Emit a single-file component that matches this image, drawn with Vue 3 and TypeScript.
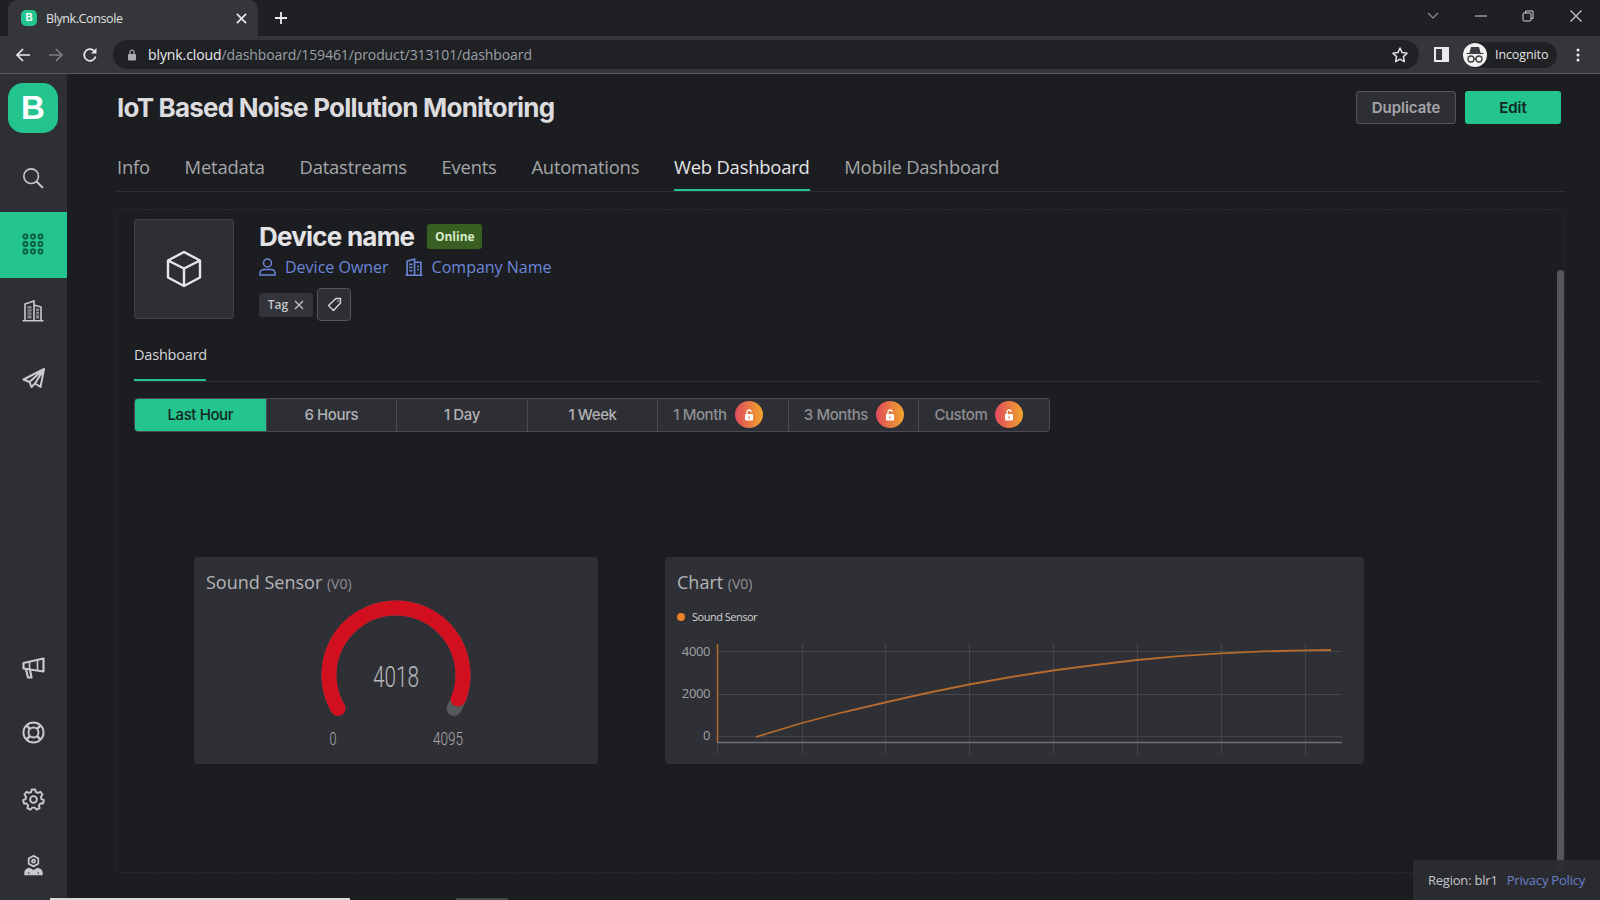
<script setup lang="ts">
import { computed } from 'vue'

interface Tab { label: string; active?: boolean }
interface Range { label: string; active?: boolean; locked?: boolean }

const tabs: Tab[] = [
  { label: 'Info' },
  { label: 'Metadata' },
  { label: 'Datastreams' },
  { label: 'Events' },
  { label: 'Automations' },
  { label: 'Web Dashboard', active: true },
  { label: 'Mobile Dashboard' }
]

const ranges: Range[] = [
  { label: 'Last Hour', active: true },
  { label: '6 Hours' },
  { label: '1 Day' },
  { label: '1 Week' },
  { label: '1 Month', locked: true },
  { label: '3 Months', locked: true },
  { label: 'Custom', locked: true }
]

const gridX = [124.5, 207.5, 291.5, 375.5, 459.5, 543.5, 627.5]
const gridY = [7.5, 50.5, 92.5]

// точки кривой графика
const curve = [
  [78, 93], [124, 79], [166, 68], [207, 58.5], [249, 49], [291, 40.5], [333, 33], [375, 26.5],
  [417, 21], [459, 16], [501, 12.2], [543, 9.3], [585, 7.4], [627, 6.4], [653, 6]
]
const curvePoints = computed(() => curve.map((p) => p.join(',')).join(' '))
</script>

<template>
  <div class="page">
    <div class="tabstrip">
      <div class="browser-tab">
        <span class="favicon">B</span>
        <span class="browser-tab-title">Blynk.Console</span>
        <svg class="tab-x" width="11" height="11" viewBox="0 0 12 12"><path d="M1 1l10 10M11 1L1 11" stroke="#e8eaed" stroke-width="1.8" /></svg>
      </div>
      <svg class="tab-plus" width="14" height="14" viewBox="0 0 14 14"><path d="M7 1v12M1 7h12" stroke="#e8eaed" stroke-width="1.8" /></svg>
      <div class="win-controls">
        <svg width="12" height="8" viewBox="0 0 12 8"><path d="M1 1l5 5 5-5" fill="none" stroke="#8e9094" stroke-width="1.1" /></svg>
        <svg class="win-min" width="12" height="2" viewBox="0 0 12 2"><path d="M0 1h12" stroke="#d0d1d3" stroke-width="1" /></svg>
        <svg class="win-max" width="12" height="12" viewBox="0 0 12 12"><rect x="1" y="3" width="8" height="8" rx="1" fill="none" stroke="#d0d1d3" /><path d="M3.5 3V1H11v7.5H9" fill="none" stroke="#d0d1d3" /></svg>
        <svg class="win-close" width="12" height="12" viewBox="0 0 12 12"><path d="M.5.5l11 11M11.5.5l-11 11" stroke="#d0d1d3" stroke-width="1.1" /></svg>
      </div>
    </div>

    <div class="toolbar">
      <svg width="16" height="16" viewBox="0 0 16 16"><path d="M15 8H2M8 2L2 8l6 6" fill="none" stroke="#e8eaed" stroke-width="1.7" /></svg>
      <svg class="fwd" width="16" height="16" viewBox="0 0 16 16"><path d="M1 8h13M8 2l6 6-6 6" fill="none" stroke="#7c7e82" stroke-width="1.7" /></svg>
      <svg class="reload" width="16" height="16" viewBox="0 0 16 16"><path d="M13.6 9.5A5.8 5.8 0 1 1 12.2 4" fill="none" stroke="#e8eaed" stroke-width="1.7" /><path d="M14.5 1v5.4H9z" fill="#e8eaed" /></svg>
      <div class="omnibox">
        <svg width="10" height="12" viewBox="0 0 10 12"><rect x="1" y="5" width="8" height="6.5" rx="1" fill="#a9abae" /><path d="M3 5V3.2a2 2 0 0 1 4 0V5" fill="none" stroke="#a9abae" stroke-width="1.2" /></svg>
        <span class="url"><span class="host">blynk.cloud</span>/dashboard/159461/product/313101/dashboard</span>
        <svg class="star" width="18" height="18" viewBox="0 0 18 18"><path d="M9 2l2.1 4.6 5 .6-3.7 3.4 1 5L9 13.100l-4.400 2.500 1-5L1.900 7.200l5-.6z" fill="none" stroke="#e0e1e3" stroke-width="1.5" stroke-linejoin="round" /></svg>
      </div>
      <svg class="side-panel" width="15" height="15" viewBox="0 0 15 15"><rect x="1" y="1" width="13" height="13" fill="none" stroke="#e8eaed" stroke-width="2" /><rect x="8" y="1" width="6" height="13" fill="#e8eaed" /></svg>
      <div class="incognito">
        <span class="incognito-badge">
          <svg width="20" height="18" viewBox="0 0 20 18"><path d="M5 7l1.500-5.500h7L15 7zM1.500 7.500h17" fill="#3b3c3f" stroke="#3b3c3f" stroke-width="1.2" /><circle cx="6" cy="13" r="3" fill="none" stroke="#3b3c3f" stroke-width="1.3" /><circle cx="14" cy="13" r="3" fill="none" stroke="#3b3c3f" stroke-width="1.3" /><path d="M9 13h2" stroke="#3b3c3f" stroke-width="1.3" /></svg>
        </span>
        <span>Incognito</span>
      </div>
      <svg class="kebab" width="4" height="14" viewBox="0 0 4 14"><circle cx="2" cy="2" r="1.5" fill="#e8eaed" /><circle cx="2" cy="7" r="1.5" fill="#e8eaed" /><circle cx="2" cy="12" r="1.5" fill="#e8eaed" /></svg>
    </div>

    <div class="app">
      <aside class="sidebar">
        <div class="logo">B</div>
        <div class="nav-item nav-search">
          <svg width="22" height="22" viewBox="0 0 24 24"><circle cx="10" cy="10" r="8" fill="none" stroke="#c8c9cb" stroke-width="1.8" /><path d="M15.800 15.800l7 7" stroke="#c8c9cb" stroke-width="2.2" /></svg>
        </div>
        <div class="nav-item nav-active">
          <svg width="22" height="22" viewBox="0 0 22 22">
            <g fill="none" stroke="#0b5c40" stroke-width="1.8">
              <rect x="1.500" y="1.500" width="4" height="4" rx="1.500" /><rect x="9" y="1.500" width="4" height="4" rx="1.500" /><rect x="16.500" y="1.500" width="4" height="4" rx="1.500" />
              <rect x="1.500" y="9" width="4" height="4" rx="1.500" /><rect x="9" y="9" width="4" height="4" rx="1.500" /><rect x="16.500" y="9" width="4" height="4" rx="1.500" />
              <rect x="1.500" y="16.500" width="4" height="4" rx="1.500" /><rect x="9" y="16.500" width="4" height="4" rx="1.500" /><rect x="16.500" y="16.500" width="4" height="4" rx="1.500" />
            </g>
          </svg>
        </div>
        <div class="nav-item">
          <svg width="22" height="22" viewBox="0 0 22 22"><g fill="none" stroke="#c8c9cb" stroke-width="1.6"><path d="M3 20V4l9-3v19M12 5l7 2v13M.5 20.800h21" /></g><path d="M5.500 6h4v12.500h-4zM14.200 8.500h2.800v10h-2.800z" fill="#8a8b8f" /><path d="M5.500 9h4M5.500 12h4M5.500 15h4M14.200 11.500H17M14.200 14.500H17" stroke="#2e2f34" stroke-width=".8" /></svg>
        </div>
        <div class="nav-item nav-plane">
          <svg width="23" height="20" viewBox="0 0 23 20"><g fill="none" stroke="#c8c9cb" stroke-width="2" stroke-linejoin="round"><path d="M22 1L1.500 11.500l6 2.500zM22 1l-9 14.500 5.500 3.500zM7.500 14l2 5 3.500-3.500" /></g></svg>
        </div>
        <div class="nav-spacer"></div>
        <div class="nav-item nav-horn">
          <svg width="23" height="22" viewBox="0 0 23 22"><g fill="none" stroke="#c8c9cb" stroke-width="2.2" stroke-linejoin="round"><path d="M1.500 6L21.500 1.500v13L1.500 11.500z" /><path d="M7.500 5v8M15.500 3v10" stroke-width="1.6" /><path d="M4 12.500l2 8h3.500L8 13" /></g></svg>
        </div>
        <div class="nav-item nav-ring">
          <svg width="23" height="23" viewBox="0 0 24 24"><g fill="none" stroke="#c8c9cb" stroke-width="2"><circle cx="12" cy="12" r="10.500" /><circle cx="12" cy="12" r="5.200" /><path d="M4.800 4.800l3.400 3.400M19.200 4.800l-3.400 3.400M4.800 19.200l3.400-3.400M19.200 19.200l-3.400-3.400" stroke-width="2.6" /></g></svg>
        </div>
        <div class="nav-item">
          <svg width="23" height="23" viewBox="0 0 24 24"><g fill="none" stroke="#c8c9cb" stroke-width="2" stroke-linejoin="round"><path d="M10.200 1.500h3.600l.7 2.700 2.200 1 2.500-1.200 2.200 2.800-1.600 2.300.5 2.400 2.500 1.100-.8 3.500-2.800.1-1.500 2-.1.100.8 2.700-3.200 1.600-1.900-2.100h-2.600l-1.900 2.100-3.200-1.600.8-2.700-1.600-2.100-2.800-.1-.8-3.500 2.500-1.100.5-2.400L2.600 6.800l2.200-2.800 2.500 1.200 2.200-1z" /><circle cx="12" cy="12" r="3.500" /></g></svg>
        </div>
        <div class="nav-item nav-last">
          <svg width="21" height="23" viewBox="0 0 24 24"><g fill="none" stroke="#c8c9cb" stroke-width="2" stroke-linejoin="round"><path d="M12 1l5.500 3v6L12 13 6.500 10V4z" /><circle cx="12" cy="7" r="1.800" /></g><path d="M1.500 23v-3c0-3 3-5 6-5.500l4.500 2.500 4.500-2.500c3 .5 6 2.500 6 5.500v3z" fill="#c8c9cb" /><path d="M6.500 21.500V20M17.500 21.500V20" stroke="#2e2f34" stroke-width="1.6" /></svg>
        </div>
      </aside>

      <main class="main">
        <header class="head">
          <h1>IoT Based Noise Pollution Monitoring</h1>
          <button class="btn btn-dup">Duplicate</button>
          <button class="btn btn-edit">Edit</button>
        </header>

        <nav class="tabs">
          <span v-for="t in tabs" :key="t.label" class="tab" :class="{ on: t.active }">{{ t.label }}</span>
        </nav>

        <section class="panel">
          <div class="device">
            <div class="device-img">
              <svg width="38" height="38" viewBox="0 0 38 38"><g fill="none" stroke="#e6e6e8" stroke-width="2.4" stroke-linejoin="round"><path d="M19 2l16 8.500v17L19 36 3 27.500v-17zM3 10.500l16 8 16-8M19 18.500V36" /></g></svg>
            </div>
            <div class="device-info">
              <div class="device-title">
                <span class="device-name">Device name</span>
                <span class="online">Online</span>
              </div>
              <div class="device-links">
                <svg width="17" height="18" viewBox="0 0 17 18"><g fill="none" stroke="#6b86d9" stroke-width="1.5"><circle cx="8.500" cy="5" r="4" /><path d="M1 17v-2c0-2.200 2-3.500 4-3.500h7c2 0 4 1.300 4 3.500v2z" /></g></svg>
                <span class="link">Device Owner</span>
                <svg class="link-icon" width="18" height="18" viewBox="0 0 17 17"><g fill="none" stroke="#6b86d9" stroke-width="1.5"><path d="M2 16V3l7-2v15M9 4h6v12M.5 16.300h16" /><path d="M4 6h3M4 9h3M4 12h3M11.500 8h1.500M11.500 11h1.500" /></g></svg>
                <span class="link">Company Name</span>
              </div>
              <div class="device-tags">
                <span class="tag">Tag
                  <svg width="10" height="10" viewBox="0 0 10 10"><path d="M1 1l8 8M9 1L1 9" stroke="#c4c5c7" stroke-width="1.3" /></svg>
                </span>
                <span class="tag-btn">
                  <svg width="15" height="15" viewBox="0 0 15 15"><path d="M9 1.500h4.500V6L6.500 13.500 1.500 8.500z" fill="none" stroke="#d8d9db" stroke-width="1.4" stroke-linejoin="round" /><circle cx="11" cy="4" r=".8" fill="#d8d9db" /></svg>
                </span>
              </div>
            </div>
          </div>

          <div class="subtabs"><span class="subtab">Dashboard</span></div>

          <div class="ranges">
            <div v-for="r in ranges" :key="r.label" class="range" :class="{ on: r.active, locked: r.locked }">
              <span>{{ r.label }}</span>
              <span v-if="r.locked" class="lock">
                <svg width="10" height="12" viewBox="0 0 10 12"><rect x="1" y="5" width="8" height="6.500" rx="1" fill="#fff" /><path d="M3 5V3a2 2 0 0 1 4 0" fill="none" stroke="#fff" stroke-width="1.3" /><path d="M5 7.500v2" stroke="#e8703f" stroke-width="1.2" /></svg>
              </span>
            </div>
          </div>

          <div class="widgets">
            <div class="widget gauge-card">
              <div class="widget-title">Sound Sensor <small>(V0)</small></div>
              <svg class="gauge" width="160" height="155" viewBox="0 0 160 155">
                <path d="M22 108.500A67 67 0 1 1 138 108.500" fill="none" stroke="#57585c" stroke-width="15" stroke-linecap="round" />
                <path d="M22 108.500A67 67 0 1 1 142.500 99" fill="none" stroke="#d10f1f" stroke-width="15" />
                <circle cx="22" cy="108.500" r="7.500" fill="#d10f1f" />
                <circle cx="142" cy="99" r="7.500" fill="#d10f1f" />
                <text x="80" y="87" text-anchor="middle" textLength="46" lengthAdjust="spacingAndGlyphs" class="gauge-val">4018</text>
                <text x="17" y="145" text-anchor="middle" textLength="7" lengthAdjust="spacingAndGlyphs" class="gauge-lim">0</text>
                <text x="132" y="145" text-anchor="middle" textLength="30" lengthAdjust="spacingAndGlyphs" class="gauge-lim">4095</text>
              </svg>
            </div>
            <div class="widget chart-card">
              <div class="widget-title">Chart <small>(V0)</small></div>
              <div class="legend"><i></i>Sound Sensor</div>
              <svg class="chart" width="680" height="115" viewBox="0 0 680 115">
                <g stroke="#45464b" stroke-width="1">
                  <line v-for="y in gridY" :key="y" x1="39" x2="664" :y1="y" :y2="y" />
                  <line x1="39.500" x2="39.500" y1="98" y2="110" />
                  <line v-for="x in gridX" :key="x" :x1="x" :x2="x" y1="0" y2="110" />
                </g>
                <line x1="39" x2="664" y1="98.500" y2="98.500" stroke="#6f7074" stroke-width="1.5" />
                <line x1="39.500" x2="39.500" y1="0" y2="98" stroke="#b56a2e" stroke-width="1.5" />
                <polyline :points="curvePoints" fill="none" stroke="#b56a2e" stroke-width="1.8" />
                <text x="32" y="12" text-anchor="end" class="chart-y">4000</text>
                <text x="32" y="54" text-anchor="end" class="chart-y">2000</text>
                <text x="32" y="96" text-anchor="end" class="chart-y">0</text>
              </svg>
            </div>
          </div>
        </section>

        <div class="scrollbar"></div>
        <footer class="region"><span>Region: blr1</span><a>Privacy Policy</a></footer>
      </main>
    </div>

    <!-- полоска панели загрузок снизу -->
    <div class="strip strip-light"></div>
    <div class="strip strip-dim"></div>
  </div>
</template>

<style>
html, body { margin: 0; background: #1c1d21; overflow: hidden; }
</style>

<style scoped>
.page {
  position: relative;
  width: 1600px;
  height: 900px;
  display: flex;
  flex-direction: column;
  overflow: hidden;
  font-family: "Open Sans", "Noto Sans", sans-serif;
  background: #1c1d21;
  color: #c4c5c7;
}

/* браузер */
.tabstrip {
  height: 36px;
  background: #1f2023;
  display: flex;
  align-items: flex-end;
  padding-left: 8px;
  flex-shrink: 0;
}
.browser-tab {
  width: 250px;
  height: 36px;
  background: #35363a;
  border-radius: 9px 9px 0 0;
  display: flex;
  align-items: center;
  padding: 0 11px 0 13px;
  box-sizing: border-box;
  color: #e0e1e3;
  font-size: 12.5px;
}
.favicon {
  width: 16px;
  height: 16px;
  border-radius: 5px;
  background: #23c48e;
  color: #fff;
  font: bold 10px/16px "Liberation Sans", sans-serif;
  text-align: center;
  margin-right: 9px;
}
.browser-tab-title { flex: 1; letter-spacing: -0.4px; }
.tab-plus { margin: 0 0 11px 16px; }
.win-controls {
  margin-left: auto;
  height: 36px;
  display: flex;
  align-items: center;
  padding: 0 18px 4px 0;
  box-sizing: border-box;
}
.win-min { margin-left: 36px; }
.win-max { margin-left: 35px; }
.win-close { margin-left: 36px; }

.toolbar {
  height: 37px;
  background: #35363a;
  border-bottom: 1px solid #5a5b5f;
  display: flex;
  align-items: center;
  padding-left: 15px;
  flex-shrink: 0;
}
.fwd { margin-left: 17px; }
.reload { margin-left: 18px; }
.omnibox {
  width: 1306px;
  height: 29px;
  margin-left: 15px;
  border-radius: 15px;
  background: #202124;
  display: flex;
  align-items: center;
  padding: 0 10px 0 14px;
  box-sizing: border-box;
}
.url {
  margin-left: 11px;
  font-size: 14px;
  color: #9aa0a6;
  letter-spacing: -0.1px;
}
.host { color: #e8eaed; }
.star { margin-left: auto; }
.side-panel { margin-left: 15px; }
.incognito {
  margin-left: 14px;
  width: 94px;
  height: 26px;
  border-radius: 13px;
  background: #202124;
  display: flex;
  align-items: center;
  gap: 8px;
  font-size: 12.5px;
  color: #e0e1e3;
  letter-spacing: -0.1px;
}
.incognito-badge {
  width: 24px;
  height: 24px;
  border-radius: 50%;
  background: #f1f1f2;
  display: flex;
  align-items: center;
  justify-content: center;
}
.kebab { margin-left: 19px; }

/* приложение */
.app { flex: 1; display: flex; min-height: 0; }
.sidebar {
  width: 67px;
  background: #2e2f34;
  display: flex;
  flex-direction: column;
  flex-shrink: 0;
}
.logo {
  width: 50px;
  height: 50px;
  margin: 9px 0 0 8px;
  border-radius: 15px;
  background: #23c48e;
  color: #fff;
  font: bold 33px/50px "Liberation Sans", sans-serif;
  text-align: center;
}
.nav-item {
  height: 66px;
  padding-right: 1px;
  box-sizing: border-box;
  display: flex;
  align-items: center;
  justify-content: center;
}
.nav-search { margin-top: 13px; padding-bottom: 2px; }
.nav-active { background: #23c48e; padding-bottom: 2px; }
.nav-plane { padding-top: 1px; }
.nav-horn { padding-top: 2px; }
.nav-ring { padding-bottom: 2px; }
.nav-spacer { flex: 1; }
.nav-last { margin-bottom: 2px; }

.main {
  flex: 1;
  position: relative;
  padding: 0 35px 0 49px;
  min-width: 0;
}
.head {
  display: flex;
  align-items: center;
  height: 66px;
  padding: 0 4px 0 1px;
}
.head h1 {
  margin: 0 auto 0 0;
  font: 700 26px "Inter", sans-serif;
  color: #dcdcde;
  letter-spacing: -0.78px;
}
.btn {
  height: 33px;
  border-radius: 3px;
  font: 600 15px "Inter", sans-serif;
  padding: 0;
}
.btn-dup {
  width: 100px;
  background: #2e2f34;
  border: 1px solid #55565a;
  color: #a5a6a9;
}
.btn-edit {
  width: 96px;
  margin-left: 9px;
  background: #23c48e;
  border: 0;
  color: #12261f;
}

.tabs {
  display: flex;
  gap: 34.7px;
  height: 37px;
  padding-left: 1px;
  border-bottom: 1px solid #2e2f34;
  margin-top: 14px;
}
.tab {
  font-size: 18.4px;
  line-height: 26px;
  color: #a5a6a9;
  letter-spacing: -0.2px;
  height: 35px;
}
.tab.on {
  color: #e6e6e8;
  border-bottom: 2px solid #23c48e;
}

.panel {
  margin-top: 17px;
  height: 664px;
  border: 1px dashed #2a2b30;
  border-radius: 3px;
  box-sizing: border-box;
  padding: 9px 24px 0 17px;
}
.device { display: flex; }
.device-img {
  width: 100px;
  height: 100px;
  border: 1px solid #3e3f44;
  border-radius: 3px;
  background: #2e2f34;
  box-sizing: border-box;
  display: flex;
  align-items: center;
  justify-content: center;
}
.device-info { margin-left: 25px; }
.device-title { display: flex; align-items: center; height: 34px; }
.device-name {
  font: 700 26px "Inter", sans-serif;
  color: #e4e4e6;
  letter-spacing: -0.78px;
}
.online {
  margin-left: 13px;
  height: 25px;
  width: 55px;
  border-radius: 3px;
  background: #3a5f23;
  color: #d7ecc8;
  font-size: 12px;
  font-weight: 700;
  line-height: 25px;
  text-align: center;
}
.device-links {
  display: flex;
  align-items: center;
  height: 28px;
}
.link {
  margin-left: 9px;
  font-size: 16px;
  color: #6b86d9;
}
.link-icon { margin-left: 16px; }
.device-tags { display: flex; align-items: center; margin-top: 7px; gap: 4px; }
.tag {
  height: 24px;
  width: 54px;
  border-radius: 3px;
  background: #33343a;
  font-size: 12px;
  font-weight: 600;
  display: flex;
  align-items: center;
  justify-content: center;
  gap: 6px;
  color: #c4c5c7;
}
.tag-btn {
  width: 34px;
  height: 33px;
  border: 1px solid #55565a;
  border-radius: 4px;
  background: #2e2f34;
  box-sizing: border-box;
  display: flex;
  align-items: center;
  justify-content: center;
}

.subtabs {
  margin-top: 17px;
  height: 43px;
  border-bottom: 1px solid #2e2f34;
}
.subtab {
  display: inline-block;
  height: 41px;
  width: 72px;
  line-height: 34px;
  font-size: 14.5px;
  color: #d4d5d7;
  letter-spacing: -0.2px;
  border-bottom: 2px solid #23c48e;
}

.ranges {
  margin-top: 16px;
  display: flex;
  width: 916px;
  height: 34px;
  border: 1px solid #4a4b50;
  border-radius: 4px;
  box-sizing: border-box;
  background: #2e2f34;
  overflow: hidden;
}
.range {
  width: 130.57px;
  flex: none;
  padding-bottom: 1px;
  display: flex;
  align-items: center;
  justify-content: center;
  border-left: 1px solid #4a4b50;
  box-sizing: border-box;
  font: 500 15px "Inter", sans-serif;
  letter-spacing: -0.4px;
  color: #b0b1b4;
  gap: 8px;
}
.range:first-child { border-left: 0; }
.range.on { background: #23c48e; color: #12261f; }
.range.locked { color: #8d8e92; justify-content: flex-start; padding-left: 15px; }
.lock {
  width: 28px;
  height: 27px;
  border-radius: 50%;
  background: linear-gradient(90deg, #df4a5c, #f0a52c);
  display: flex;
  align-items: center;
  justify-content: center;
}

.widgets {
  margin-top: 125px;
  margin-left: 60px;
  display: flex;
  gap: 67px;
}
.widget {
  height: 207px;
  border-radius: 4px;
  background: #2f3035;
  box-sizing: border-box;
  position: relative;
  padding: 13px 12px 0;
}
.gauge-card { width: 404px; }
.chart-card { width: 699px; }
.widget-title {
  font-size: 18px;
  line-height: 25px;
  color: #b4b5b8;
}
.widget-title small { font-size: 14px; color: #8f9094; }
.gauge {
  position: absolute;
  left: 122px;
  top: 43px;
}
.gauge-val {
  font: 300 30px "Roboto", sans-serif;
  fill: #b8b9bc;
}
.gauge-lim {
  font: 300 19px "Roboto", sans-serif;
  fill: #a8a9ac;
}
.legend {
  display: flex;
  align-items: center;
  margin-top: 13px;
  font-size: 11px;
  color: #d0d1d3;
  letter-spacing: -0.5px;
}
.legend i {
  width: 8px;
  height: 8px;
  border-radius: 50%;
  background: #e8832a;
  margin-right: 7px;
}
.chart { position: absolute; left: 13px; top: 87px; overflow: visible; }
.chart-y {
  font-size: 13px;
  fill: #a0a1a4;
  letter-spacing: -0.4px;
}

.scrollbar {
  position: absolute;
  right: 36px;
  top: 196px;
  bottom: 28px;
  width: 7px;
  border-radius: 4px 4px 0 0;
  background: #55565a;
}
.region {
  position: absolute;
  right: 0;
  bottom: 0;
  width: 187px;
  height: 40px;
  background: rgba(44, 45, 50, 0.94);
  display: flex;
  align-items: center;
  justify-content: center;
  gap: 9px;
  font-size: 13px;
  color: #c4c5c7;
  letter-spacing: -0.2px;
}
.region a { color: #6b7fc8; }

.strip { position: absolute; bottom: 0; height: 2px; }
.strip-light { left: 50px; width: 300px; background: #d8d8da; }
.strip-dim { left: 456px; width: 52px; background: #45464a; }
</style>
